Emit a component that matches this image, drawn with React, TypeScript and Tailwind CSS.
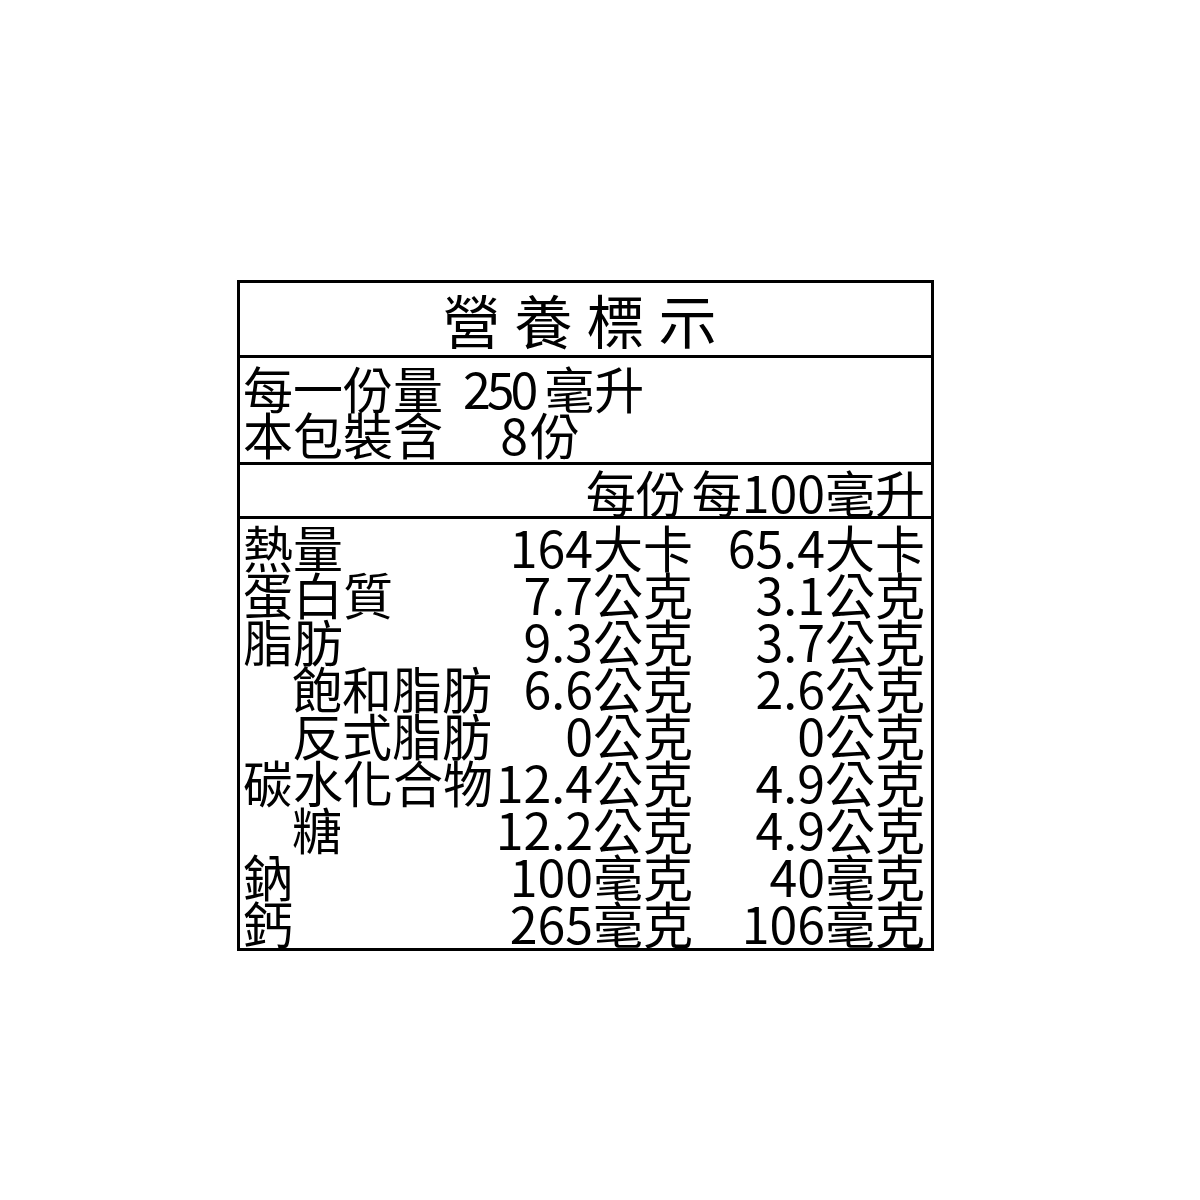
const rows: { label: string; indent?: boolean; a: string; b: string }[] = [
  { label: '熱量', a: '164大卡', b: '65.4大卡' },
  { label: '蛋白質', a: '7.7公克', b: '3.1公克' },
  { label: '脂肪', a: '9.3公克', b: '3.7公克' },
  { label: '飽和脂肪', indent: true, a: '6.6公克', b: '2.6公克' },
  { label: '反式脂肪', indent: true, a: '0公克', b: '0公克' },
  { label: '碳水化合物', a: '12.4公克', b: '4.9公克' },
  { label: '糖', indent: true, a: '12.2公克', b: '4.9公克' },
  { label: '鈉', a: '100毫克', b: '40毫克' },
  { label: '鈣', a: '265毫克', b: '106毫克' },
];

export default function App() {
  return (
    <div className="w-[1200px] h-[1200px] bg-white pt-[280px] pl-[237px] text-black font-['Noto_Sans_CJK_TC','Noto_Sans_CJK_SC',sans-serif]">
      <div className="w-[697px] border-[3px] border-black">
        {/* title */}
        <div className="h-[75px] flex items-center justify-center border-b-[3px] border-black">
          <span className="text-[58px] leading-none tracking-[14px] pl-[2px]">營養標示</span>
        </div>

        {/* serving info */}
        <div className="h-[107px] pl-[3px] pt-[6px] border-b-[3px] border-black text-[50px] leading-[46px]">
          <div className="flex whitespace-nowrap">
            <span className="w-[220px]">每一份量</span>
            <span className="tracking-[-4px]">250</span>
            <span className="ml-[10px]">毫升</span>
          </div>
          <div className="flex whitespace-nowrap">
            <span className="w-[220px]">本包裝含</span>
            <span className="w-[65px] text-right">8</span>
            <span className="ml-[2px]">份</span>
          </div>
        </div>

        {/* column heads */}
        <div className="h-[54px] flex items-center justify-end pr-[6px] border-b-[3px] border-black text-[50px] leading-none whitespace-nowrap">
          <span>每份</span>
          <span className="ml-[6px]">每100毫升</span>
        </div>

        {/* nutrients */}
        <div className="pl-[3px] pr-[6px] pt-[4px] pb-[2px] text-[50px] leading-[47px] whitespace-nowrap">
          {rows.map((r) => (
            <div key={r.label} className="grid grid-cols-[247px_203px_232px]">
              <span className={r.indent ? 'pl-[49px]' : ''}>{r.label}</span>
              <span className="text-right">{r.a}</span>
              <span className="text-right">{r.b}</span>
            </div>
          ))}
        </div>
      </div>
    </div>
  );
}
